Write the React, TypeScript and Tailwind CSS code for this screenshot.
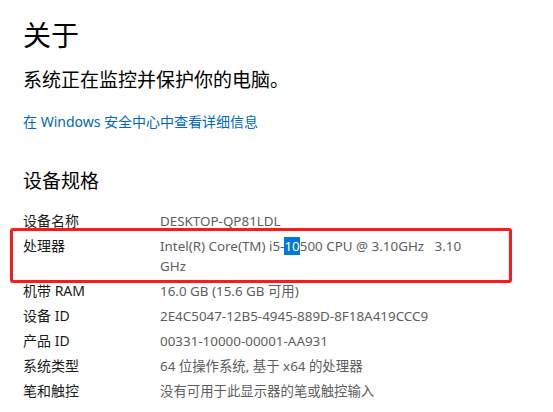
const FONT = { fontFamily: '"Noto Sans", "Noto Sans CJK SC", sans-serif' };

const specs: { label: string; value: React.ReactNode; marked?: boolean }[] = [
  { label: '设备名称', value: 'DESKTOP-QP81LDL' },
  {
    label: '处理器',
    value: (
      <>
        Intel(R) Core(TM) i5-<span className="bg-[#0078d7] text-white">10</span>500 CPU @ 3.10GHz&nbsp;&nbsp;&nbsp;3.10 GHz
      </>
    ),
    marked: true,
  },
  { label: '机带 RAM', value: '16.0 GB (15.6 GB 可用)' },
  { label: '设备 ID', value: '2E4C5047-12B5-4945-889D-8F18A419CCC9' },
  { label: '产品 ID', value: '00331-10000-00001-AA931' },
  { label: '系统类型', value: '64 位操作系统, 基于 x64 的处理器' },
  { label: '笔和触控', value: '没有可用于此显示器的笔或触控输入' },
];

export default function App() {
  return (
    <div className="w-[553px] h-[412px] overflow-hidden bg-white pl-[23px] pt-[17px]" style={FONT}>
      <h1 className="text-[28px] leading-[36px] text-black">关于</h1>
      <p className="mt-[13px] text-[19px] leading-[28px] text-black">系统正在监控并保护你的电脑。</p>
      <a className="mt-[18px] block text-[14px] leading-[20px] text-[#0067c0]">在 Windows 安全中心中查看详细信息</a>

      <h2 className="mt-[35px] text-[19px] leading-[28px] text-black">设备规格</h2>
      <div className="mt-[16px] flex flex-col gap-[5px] text-[14px] leading-[20px]">
        {specs.map((s) => (
          <div key={s.label} className="relative flex">
            {s.marked && (
              <div className="pointer-events-none absolute left-[-13px] top-[-8px] h-[55px] w-[502px] rounded-[3px] border-[3px] border-[#ff1a1a]" />
            )}
            <div className="w-[137px] shrink-0 text-[#1a1a1a]">{s.label}</div>
            <div className="max-w-[318px] text-[13.4px] text-[#5d5d5d]">{s.value}</div>
          </div>
        ))}
      </div>
    </div>
  );
}
